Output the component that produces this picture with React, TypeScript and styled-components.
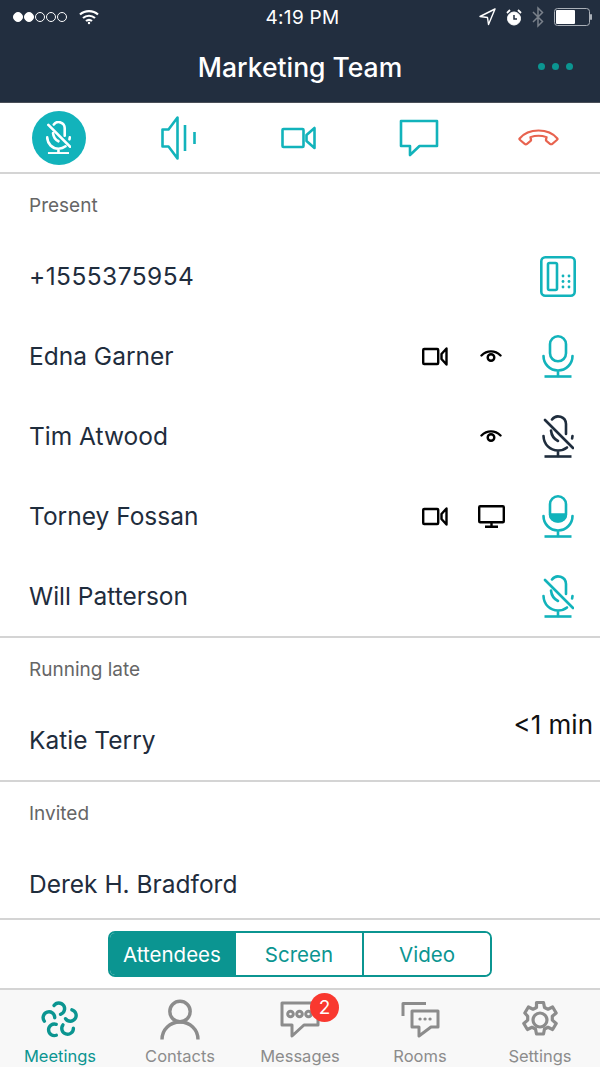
import React from 'react'
import styled, { createGlobalStyle } from 'styled-components'

const teal = '#12b3bb'
const deep = '#0b9591'
const ink = '#1f2d3d'

const GlobalStyle = createGlobalStyle`
  html, body {
    margin: 0;
    padding: 0;
    background: #fff;
    font-family: Inter, "Liberation Sans", sans-serif;
  }
  * { box-sizing: border-box; }
`

const Screen = styled.div`
  width: 600px;
  height: 1067px;
  display: flex;
  flex-direction: column;
  overflow: hidden;
`

const Header = styled.header`
  height: 103px;
  flex: none;
  background: #222e3f;
  color: #fff;
  border-bottom: 1px solid #4a4f58;
`

const StatusBar = styled.div`
  height: 34px;
  padding: 0 8px 0 13px;
  display: grid;
  grid-template-columns: 1fr auto 1fr;
  align-items: center;
`

const StatusLeft = styled.div`
  display: flex;
  align-items: center;
  gap: 12px;
`

const StatusRight = styled.div`
  display: flex;
  align-items: center;
  justify-content: flex-end;
  gap: 10px;
`

const Clock = styled.span`
  font-size: 19px;
  letter-spacing: 0.3px;
`

const Signal = styled.div`
  display: flex;
  gap: 1px;
`

const SignalDot = styled.span<{ $on: boolean }>`
  width: 10px;
  height: 10px;
  border-radius: 50%;
  border: 1px solid #fff;
  background: ${p => (p.$on ? '#fff' : 'transparent')};
`

const TitleBar = styled.div`
  height: 68px;
  position: relative;
  display: flex;
  align-items: center;
  justify-content: center;
`

const Title = styled.h1`
  margin: 0 0 2px;
  font-size: 26.5px;
  font-weight: 500;
`

const MoreDots = styled.div`
  position: absolute;
  right: 27px;
  top: 29px;
  display: flex;
  gap: 7px;
`

const MoreDot = styled.span`
  width: 7px;
  height: 7px;
  border-radius: 50%;
  background: ${deep};
`

const Toolbar = styled.div`
  height: 71px;
  flex: none;
  display: grid;
  grid-template-columns: repeat(5, 120px);
  border-bottom: 2px solid #d4d4d4;
  color: ${teal};
`

const ToolButton = styled.div`
  display: flex;
  align-items: center;
  justify-content: center;
  padding-right: 3px;
`

const MuteCircle = styled.div`
  width: 54px;
  height: 54px;
  border-radius: 50%;
  background: ${teal};
  color: #fff;
  display: flex;
  align-items: center;
  justify-content: center;
`

const Section = styled.section<{ $ruled?: boolean }>`
  flex: none;
  border-bottom: ${p => (p.$ruled ? '2px solid #d4d4d4' : 'none')};
`

const SectionLabel = styled.div`
  height: 62px;
  padding: 21px 0 0 29px;
  font-size: 19px;
  line-height: 22px;
  color: #666;
`

const Row = styled.div`
  height: 80px;
  padding: 0 3px 0 29px;
  display: flex;
  align-items: center;
  color: ${ink};
`

const Name = styled.span`
  flex: 1;
  font-size: 24.5px;
`

const PhoneNumber = styled(Name)`
  letter-spacing: 0.45px;
`

const Slot = styled.span`
  width: 56px;
  display: flex;
  justify-content: center;
  color: #000;
`

const MicSlot = styled.span<{ $dark?: boolean }>`
  width: 78px;
  display: flex;
  justify-content: center;
  color: ${p => (p.$dark ? ink : teal)};
`

const Late = styled.span`
  align-self: flex-start;
  margin: 10px 4px 0 0;
  font-size: 26px;
  line-height: 30px;
  color: #111;
`

const LastRow = styled(Row)`
  height: 74px;
  padding-top: 6px;
`

const SegmentBar = styled.div`
  height: 70px;
  flex: none;
  border-top: 2px solid #d4d4d4;
  display: flex;
  justify-content: center;
  padding-top: 11px;
`

const Segmented = styled.div`
  width: 384px;
  height: 46px;
  display: grid;
  grid-template-columns: 126px 128px 126px;
  border: 2px solid ${deep};
  border-radius: 7px;
  overflow: hidden;
`

const Segment = styled.div<{ $active?: boolean }>`
  display: flex;
  align-items: center;
  justify-content: center;
  font-size: 20.5px;
  color: ${p => (p.$active ? '#fff' : deep)};
  background: ${p => (p.$active ? deep : '#fff')};
  &:not(:last-child) {
    border-right: 2px solid ${deep};
  }
`

const TabBar = styled.nav`
  flex: 1;
  display: grid;
  grid-template-columns: repeat(5, 120px);
  background: #f8f8f8;
  border-top: 2px solid #d4d4d4;
`

const Tab = styled.div<{ $active?: boolean }>`
  position: relative;
  display: flex;
  flex-direction: column;
  align-items: center;
  padding-top: 9px;
  color: ${p => (p.$active ? deep : '#8c8c8c')};
`

const TabIcon = styled.div`
  height: 42px;
  display: flex;
  align-items: center;
  justify-content: center;
`

const TabLabel = styled.span`
  margin-top: 5px;
  font-size: 16.5px;
  line-height: 20px;
`

const Badge = styled.span`
  position: absolute;
  left: 70px;
  top: 3px;
  width: 29px;
  height: 29px;
  border-radius: 50%;
  background: #f9382f;
  color: #fff;
  font-size: 19px;
  display: flex;
  align-items: center;
  justify-content: center;
`

const Line = ({ w, h, sw = 2.6, children }: { w: number; h: number; sw?: number; children: React.ReactNode }) => (
  <svg width={w} height={h} viewBox={`0 0 ${w} ${h}`} fill="none" stroke="currentColor" strokeWidth={sw} strokeLinecap="round" strokeLinejoin="round">
    {children}
  </svg>
)

const MicIcon = ({ level }: { level?: boolean }) => (
  <Line w={32} h={43}>
    <rect x="8" y="1.3" width="16" height="25" rx="8" />
    {level && <path d="M8 19.500h16a8 7 0 0 1-16 0z" fill="currentColor" />}
    <path d="M1.500 21a14.500 14.500 0 0 0 29 0M16 35.500V41" />
    <path d="M2.500 41.500h27" strokeLinecap="butt" />
  </Line>
)

const MutedMicIcon = ({ scale = 1 }: { scale?: number }) => (
  <svg width={32 * scale} height={43 * scale} viewBox="0 0 32 43" fill="none" stroke="currentColor" strokeWidth={2.6 / scale} strokeLinecap="round">
    <path d="M10 4.500a7.800 7.800 0 0 1 14 4.500v10" />
    <path d="M9 15.500c.5 5 3 8.500 7 10.500" />
    <path d="M1.500 21c.3 8.500 6.500 14.500 14.500 14.500 3.500 0 6.500-1 9-3M30.500 21l-.4 2.500M16 35.500V41" />
    <path d="M2.500 41.500h27" strokeLinecap="butt" />
    <path d="M3 5l28 28" />
  </svg>
)

const VideoIcon = ({ big }: { big?: boolean }) =>
  big ? (
    <Line w={36} h={24} sw={2.6}>
      <rect x="1.500" y="3" width="21" height="18" rx="1" />
      <path d="M33.500 2v20l-8-7v-6z" />
    </Line>
  ) : (
    <Line w={26} h={19} sw={2.4}>
      <rect x="1.200" y="2" width="15" height="15" rx="1" />
      <path d="M24.500 1.500v16l-5-5.500v-5z" />
    </Line>
  )

const EyeIcon = () => (
  <Line w={22} h={14} sw={2.4}>
    <path d="M1.500 6.500C7 1 15 1 20.500 6.500" />
    <circle cx="11" cy="8.500" r="3.300" />
  </Line>
)

const MonitorIcon = () => (
  <Line w={27} h={23} sw={2.4}>
    <rect x="1.200" y="1.200" width="24.600" height="16" rx="1" />
    <path d="M13.500 17.500v4M7 21.800h13" strokeLinecap="butt" />
  </Line>
)

const DeskPhoneIcon = () => (
  <Line w={36} h={41} sw={2.6}>
    <rect x="1.300" y="1.300" width="33.400" height="38.400" rx="4" />
    <rect x="8" y="7" width="9" height="27" rx="1.500" />
    {[23, 29].map(x =>
      [20, 25.500, 31].map(y => <circle key={`${x}-${y}`} cx={x} cy={y} r="1.400" fill="currentColor" stroke="none" />),
    )}
  </Line>
)

const SpeakerIcon = () => (
  <Line w={36} h={46} sw={2.6}>
    <path d="M1.500 14.500h6L16.500 2.500v41L7.500 31.500h-6z" />
    <path d="M24 10v26M33.500 17v12" strokeLinecap="butt" />
  </Line>
)

const ChatIcon = () => (
  <Line w={40} h={38} sw={2.6}>
    <path d="M2 2h36v25H20.500L11 36v-9H2z" />
  </Line>
)

const HangupIcon = () => (
  <svg width="41" height="18" viewBox="0 0 42 22" preserveAspectRatio="none" fill="none" stroke="#e8634f" strokeWidth="2.400" strokeLinejoin="round">
    <path d="M1.800 11.500C7 4 14 1.800 21 1.800s14 2.200 19.200 9.700c.4.600.3 1.300-.2 1.800l-5 5c-.6.600-1.500.6-2.100 0l-3.700-3.600c-.5-.5-.6-1-.5-1.700l.5-3C26 8.700 23.500 8.300 21 8.300s-5 .4-8.200 1.700l.5 3c.1.700 0 1.200-.5 1.700l-3.700 3.600c-.6.600-1.500.6-2.100 0l-5-5c-.5-.5-.6-1.200-.2-1.800z" />
  </svg>
)

const MeetingsIcon = () => (
  <svg width="40" height="40" viewBox="0 0 40 40" fill="none" stroke="currentColor" strokeWidth="3.400" strokeLinecap="round">
    {[0, 72, 144, 216, 288].map(a => (
      <path key={a} d="M14 5.500A5.800 5.800 0 1 1 20.500 14.300" transform={`rotate(${a} 20 20)`} />
    ))}
  </svg>
)

const ContactsIcon = () => (
  <Line w={40} h={42} sw={3.400}>
    <circle cx="20" cy="12.500" r="10.200" />
    <path d="M2 40.500c0-10 8-17.500 18-17.500s18 7.500 18 17.500" strokeLinecap="butt" />
  </Line>
)

const MessagesIcon = () => (
  <Line w={40} h={38} sw={3}>
    <path d="M2 2h36v22H24L12 35V24H2z" />
    <circle cx="10.500" cy="13" r="2.800" />
    <circle cx="19.500" cy="13" r="2.800" />
    <circle cx="28.500" cy="13" r="2.800" />
  </Line>
)

const RoomsIcon = () => (
  <Line w={40} h={38} sw={3}>
    <path d="M3 15V2.500h23" strokeLinecap="butt" />
    <path d="M12 10h26v16h-7l-12 9v-9h-7z" />
    <path d="M20 18h.1M25 18h.1M30 18h.1" strokeWidth={3.200} />
  </Line>
)

const SettingsIcon = () => (
  <svg width="40" height="40" viewBox="0 0 40 40" fill="none" stroke="currentColor" strokeWidth="3.200" strokeLinejoin="round">
    <path d="M16.500 2.500h7l1 5 3.500 1.700 4.600-2.200 3.600 6-3.900 3.300v3.800l3.900 3.400-3.600 6-4.600-2.200-3.500 1.700-1 5h-7l-1-5-3.500-1.700-4.600 2.200-3.600-6 3.900-3.400v-3.800L4.800 13l3.600-6 4.600 2.200 3.500-1.700z" />
    <circle cx="20" cy="20" r="7" />
  </svg>
)

const attendees = [
  { name: 'Edna Garner', video: true, eye: true },
  { name: 'Tim Atwood', eye: true, muted: true, dark: true },
  { name: 'Torney Fossan', video: true, screen: true, level: true },
  { name: 'Will Patterson', muted: true },
]

const tabs = [
  { label: 'Meetings', icon: <MeetingsIcon />, active: true },
  { label: 'Contacts', icon: <ContactsIcon /> },
  { label: 'Messages', icon: <MessagesIcon />, badge: 2 },
  { label: 'Rooms', icon: <RoomsIcon /> },
  { label: 'Settings', icon: <SettingsIcon /> },
]

const App = () => (
  <Screen>
    <GlobalStyle />
    <Header>
      <StatusBar>
        <StatusLeft>
          <Signal>
            {[true, true, false, false, false].map((on, i) => (
              <SignalDot key={i} $on={on} />
            ))}
          </Signal>
          <svg width="20" height="16" viewBox="0 0 20 16" fill="none" stroke="#fff" strokeWidth="2.200">
            <path d="M1 5.500c5-4.600 13-4.600 18 0M4 9c3.400-3 8.600-3 12 0M7 12c1.700-1.400 4.300-1.400 6 0" />
            <circle cx="10" cy="14" r="1.200" fill="#fff" stroke="none" />
          </svg>
        </StatusLeft>
        <Clock>4:19 PM</Clock>
        <StatusRight>
          <svg width="17" height="18" viewBox="0 0 17 18" fill="none" stroke="#fff" strokeWidth="1.400" strokeLinejoin="round">
            <path d="M16 1L1 8.500l7.500 1 1 7z" />
          </svg>
          <svg width="16" height="17" viewBox="0 0 16 17" fill="none" stroke="#fff">
            <circle cx="8" cy="9.500" r="6.500" fill="#fff" />
            <path d="M8 6v4h3" stroke="#222e3f" strokeWidth="1.500" />
            <path d="M1 4l3-3M15 4l-3-3" strokeWidth="1.800" />
          </svg>
          <svg width="12" height="22" viewBox="0 0 12 22" fill="none" stroke="#7a818b" strokeWidth="1.500">
            <path d="M1 6l9.500 9.500L6 20V2l4.500 4.500L1 16" />
          </svg>
          <svg width="38" height="18" viewBox="0 0 38 18" fill="none">
            <rect x="0.500" y="0.500" width="35" height="17" rx="3" stroke="#aab0b8" />
            <rect x="2" y="2" width="19" height="14" rx="1" fill="#fff" />
            <rect x="36" y="6" width="2" height="6" rx="1" fill="#aab0b8" />
          </svg>
        </StatusRight>
      </StatusBar>
      <TitleBar>
        <Title>Marketing Team</Title>
        <MoreDots>
          <MoreDot />
          <MoreDot />
          <MoreDot />
        </MoreDots>
      </TitleBar>
    </Header>

    <Toolbar>
      <ToolButton>
        <MuteCircle>
          <MutedMicIcon scale={0.78} />
        </MuteCircle>
      </ToolButton>
      <ToolButton>
        <SpeakerIcon />
      </ToolButton>
      <ToolButton>
        <VideoIcon big />
      </ToolButton>
      <ToolButton>
        <ChatIcon />
      </ToolButton>
      <ToolButton>
        <HangupIcon />
      </ToolButton>
    </Toolbar>

    <Section $ruled>
      <SectionLabel>Present</SectionLabel>
      <Row>
        <PhoneNumber>+1555375954</PhoneNumber>
        <MicSlot>
          <DeskPhoneIcon />
        </MicSlot>
      </Row>
      {attendees.map(a => (
        <Row key={a.name}>
          <Name>{a.name}</Name>
          <Slot>{a.video && <VideoIcon />}</Slot>
          <Slot>
            {a.eye && <EyeIcon />}
            {a.screen && <MonitorIcon />}
          </Slot>
          <MicSlot $dark={a.dark}>{a.muted ? <MutedMicIcon /> : <MicIcon level={a.level} />}</MicSlot>
        </Row>
      ))}
    </Section>

    <Section $ruled>
      <SectionLabel>Running late</SectionLabel>
      <Row>
        <Name>Katie Terry</Name>
        <Late>&lt;1 min</Late>
      </Row>
    </Section>

    <Section>
      <SectionLabel>Invited</SectionLabel>
      <LastRow>
        <Name>Derek H. Bradford</Name>
      </LastRow>
    </Section>

    <SegmentBar>
      <Segmented>
        <Segment $active>Attendees</Segment>
        <Segment>Screen</Segment>
        <Segment>Video</Segment>
      </Segmented>
    </SegmentBar>

    <TabBar>
      {tabs.map(t => (
        <Tab key={t.label} $active={t.active}>
          <TabIcon>{t.icon}</TabIcon>
          <TabLabel>{t.label}</TabLabel>
          {t.badge && <Badge>{t.badge}</Badge>}
        </Tab>
      ))}
    </TabBar>
  </Screen>
)

export default App
